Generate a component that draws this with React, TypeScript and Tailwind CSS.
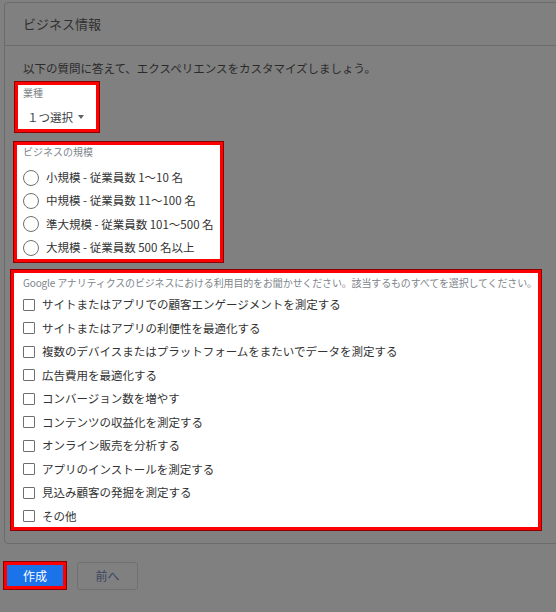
import React from 'react';

const sizes = [
  '小規模 - 従業員数 1〜10 名',
  '中規模 - 従業員数 11〜100 名',
  '準大規模 - 従業員数 101〜500 名',
  '大規模 - 従業員数 500 名以上',
];

const purposes = [
  'サイトまたはアプリでの顧客エンゲージメントを測定する',
  'サイトまたはアプリの利便性を最適化する',
  '複数のデバイスまたはプラットフォームをまたいでデータを測定する',
  '広告費用を最適化する',
  'コンバージョン数を増やす',
  'コンテンツの収益化を測定する',
  'オンライン販売を分析する',
  'アプリのインストールを測定する',
  '見込み顧客の発掘を測定する',
  'その他',
];

// red annotation frame: dark outline + bright red border
const Marked = ({ className, children }: { className: string; children: React.ReactNode }) => (
  <div className={`border border-[#8c0000] ${className}`}>
    <div className="h-full border-[3px] border-[#ff0000] bg-white">{children}</div>
  </div>
);

const App = () => {
  return (
    <div className="w-[556px] h-[612px] overflow-hidden bg-[#808080] font-['Noto_Sans_CJK_JP','Noto_Sans',sans-serif]">
      <div className="pl-[4px] pt-[2px]">
        <div className="w-[580px] rounded-[4px] border border-[#6c6c6c]">
          <div className="h-[43px] flex items-center pl-[18px] border-b border-[#6c6c6c] text-[13px] text-[#303030]">
            ビジネス情報
          </div>

          <div className="pt-[14px] pb-[12px] flex flex-col items-start">
            <p className="pl-[18px] text-[11.5px] leading-[16px] text-[#2a2a2a]">
              以下の質問に答えて、エクスペリエンスをカスタマイズしましょう。
            </p>

            <Marked className="mt-[5px] ml-[9px] w-[86px] h-[52px]">
              <div className="pl-[5px] pt-[1px]">
                <div className="text-[10px] leading-[14px] text-[#80868b]">業種</div>
                <div className="mt-[8px] pl-[4px] flex items-center gap-[5px] text-[11.5px] leading-[18px] text-[#3c4043]">
                  <span>１つ選択</span>
                  <span className="w-0 h-0 border-x-[3px] border-x-transparent border-t-[4px] border-t-[#5f6368]" />
                </div>
              </div>
            </Marked>

            <Marked className="mt-[8px] ml-[8px] w-[211px] h-[122px]">
              <div className="pl-[6px]">
                <div className="text-[10px] leading-[14px] text-[#80868b]">ビジネスの規模</div>
                <div className="mt-[7px] flex flex-col">
                  {sizes.map((s) => (
                    <div key={s} className="h-[23.3px] flex items-center gap-[7px]">
                      <span className="w-[16px] h-[16px] rounded-full border-[1.5px] border-[#6f6f6f]" />
                      <span className="text-[11.5px] text-[#333]">{s}</span>
                    </div>
                  ))}
                </div>
              </div>
            </Marked>

            <Marked className="mt-[6px] ml-[5px] w-[532px] h-[262px]">
              <div className="pl-[9px] pt-[3px]">
                <div className="whitespace-nowrap tracking-[-0.15px] text-[10px] leading-[14px] text-[#80868b]">
                  Google アナリティクスのビジネスにおける利用目的をお聞かせください。該当するものすべてを選択してください。
                </div>
                <div className="mt-[3px] flex flex-col">
                  {purposes.map((p) => (
                    <div key={p} className="h-[23.5px] flex items-center gap-[7px]">
                      <span className="w-[12px] h-[12px] rounded-[1px] border border-[#6f6f6f]" />
                      <span className="text-[11.5px] text-[#333]">{p}</span>
                    </div>
                  ))}
                </div>
              </div>
            </Marked>
          </div>
        </div>
      </div>

      <div className="mt-[17px] pl-[3px] flex items-start gap-[10px]">
        <div className="w-[64px] h-[29px] border border-[#8c0000]">
          <div className="h-full border-[3px] border-[#ff0000] bg-[#1a73e8] flex items-center justify-center text-[12px] text-white">
            作成
          </div>
        </div>
        <button className="mt-[1px] w-[61px] h-[28px] rounded-[3px] border border-[#707070] text-[12px] text-[#3b4660]">
          前へ
        </button>
      </div>
    </div>
  );
};

export default App;
